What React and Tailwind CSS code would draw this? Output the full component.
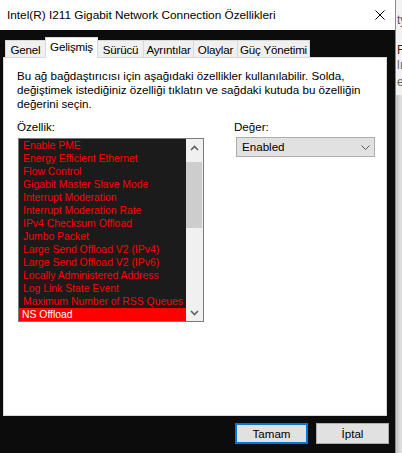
import React from "react";

const items = [
  "Enable PME",
  "Energy Efficient Ethernet",
  "Flow Control",
  "Gigabit Master Slave Mode",
  "Interrupt Moderation",
  "Interrupt Moderation Rate",
  "IPv4 Checksum Offload",
  "Jumbo Packet",
  "Large Send Offload V2 (IPv4)",
  "Large Send Offload V2 (IPv6)",
  "Locally Administered Address",
  "Log Link State Event",
  "Maximum Number of RSS Queues",
  "NS Offload",
];

function Chevron({ up }) {
  return (
    <svg width="9" height="6" viewBox="0 0 9 6">
      <path
        d={up ? "M1 5L4.5 1.5L8 5" : "M1 1L4.5 4.5L8 1"}
        fill="none"
        stroke="#606060"
        strokeWidth="1.6"
      />
    </svg>
  );
}

const tab = "h-[17px] bg-[#f0f0f0] border-t border-[#d9d9d9] flex items-center justify-center pt-px whitespace-nowrap tracking-[-0.2px]";

export default function App() {
  return (
    <div className="flex w-[402px] h-[453px] overflow-hidden bg-[#0c0c0c] font-['Liberation_Sans',Arial,sans-serif] text-[11.6px] leading-[14px] text-black">
      <div className="flex flex-col w-[395px] h-full shrink-0">
        <div className="h-[30px] bg-white flex items-center justify-between pl-[7px] pr-[10px] shrink-0 text-[11.8px]">
          <span className="whitespace-nowrap">Intel(R) I211 Gigabit Network Connection Özellikleri</span>
          <svg width="10" height="10" viewBox="0 0 10 10">
            <path d="M0.5 0.5L9.5 9.5M9.5 0.5L0.5 9.5" stroke="#000" strokeWidth="1" />
          </svg>
        </div>
        <div className="flex-1 flex flex-col pt-[7px] pl-[3px] pr-[7px]">
          <div className="flex items-end h-[20px] pl-[2px]">
            <div className={"w-[40px] border-l " + tab}>Genel</div>
            <div className="relative z-10 w-[53px] h-[21px] -mb-px bg-white border-l border-t border-r border-[#d9d9d9] flex items-center justify-center pb-[2px] whitespace-nowrap tracking-[-0.2px]">Gelişmiş</div>
            <div className={"w-[45px] " + tab}>Sürücü</div>
            <div className={"w-[50px] border-l " + tab}>Ayrıntılar</div>
            <div className={"w-[44px] border-l " + tab}>Olaylar</div>
            <div className={"w-[73px] border-l border-r " + tab}>Güç Yönetimi</div>
          </div>
          <div className="w-[384px] h-[359px] bg-white border border-[#d9d9d9] pl-[13px] pt-[11px] flex flex-col shrink-0">
            <p className="whitespace-nowrap">
              Bu ağ bağdaştırıcısı için aşağıdaki özellikler kullanılabilir. Solda,
              <br />
              değiştimek istediğiniz özelliği tıklatın ve sağdaki kutuda bu özelliğin
              <br />
              değerini seçin.
            </p>
            <div className="flex mt-[9px]">
              <div className="flex flex-col w-[187px]">
                <span>Özellik:</span>
                <div className="mt-[4px] ml-px w-[186px] h-[184px] border border-[#7a7a7a] flex">
                  <div className="flex-1 bg-[#1b1b1b] flex flex-col text-[10.4px] leading-[13px] overflow-hidden">
                    {items.map((t, i) => {
                      const sel = i === items.length - 1;
                      return (
                        <div
                          key={t}
                          className={
                            sel
                              ? "h-[13px] pl-[3px] whitespace-nowrap bg-[#ff0000] text-white"
                              : "h-[13px] pl-[4px] whitespace-nowrap text-[#ff0000]"
                          }
                        >
                          {t}
                        </div>
                      );
                    })}
                  </div>
                  <div className="w-[17px] bg-[#f0f0f0] flex flex-col">
                    <div className="h-[17px] flex items-center justify-center">
                      <Chevron up />
                    </div>
                    <div className="flex-1 flex flex-col">
                      <div className="mt-[6px] h-[66px] mr-px bg-[#cdcdcd]" />
                    </div>
                    <div className="h-[17px] flex items-center justify-center">
                      <Chevron />
                    </div>
                  </div>
                </div>
              </div>
              <div className="flex flex-col ml-[30px]">
                <span>Değer:</span>
                <div className="mt-[3px] ml-[2px] w-[139px] h-[20px] bg-[#e1e1e1] border border-[#adadad] flex items-center justify-between pl-[5px] pr-[4px]">
                  <span>Enabled</span>
                  <svg width="9" height="5" viewBox="0 0 9 5">
                    <path d="M0.5 0.5L4.5 4.5L8.5 0.5" fill="none" stroke="#555" strokeWidth="1" />
                  </svg>
                </div>
              </div>
            </div>
          </div>
          <div className="flex justify-end gap-[8px] mt-[7px] -mr-px">
            <div className="w-[73px] h-[21px] bg-[#e1e1e1] border-2 border-[#0078d7] flex items-center justify-center">Tamam</div>
            <div className="w-[73px] h-[21px] bg-[#e1e1e1] border border-[#adadad] flex items-center justify-center">İptal</div>
          </div>
        </div>
      </div>
      <div className="w-[7px] h-full shrink-0 flex flex-col border-l border-[#8a8a8a] overflow-hidden">
        <div className="h-[95px] bg-[#f2f2f2] flex flex-col text-[12px] leading-[14px] whitespace-nowrap pl-px">
          <span className="mt-[13px] text-[#555]">ty</span>
          <span className="mt-[16px] text-[#5a1010]">F</span>
          <span className="mt-px text-[#666]">lı</span>
          <span className="mt-[3px] text-[#666]">el(</span>
        </div>
        <div className="flex-1 bg-gradient-to-r from-[#c4c4c4] to-[#e4e4e4]" />
      </div>
    </div>
  );
}
